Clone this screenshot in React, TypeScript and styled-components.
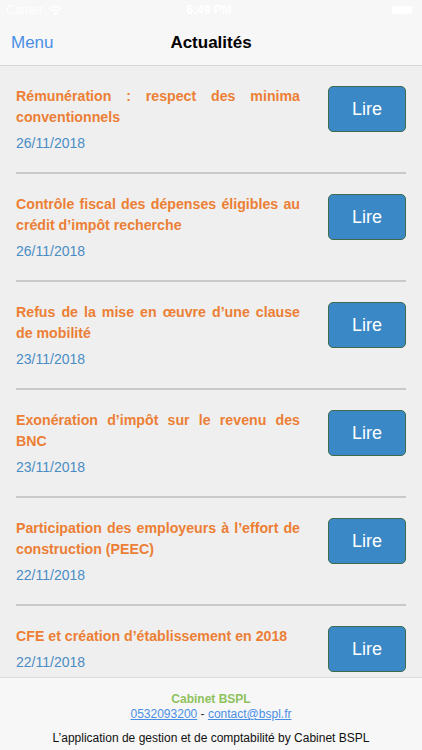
import React from 'react';
import styled, { createGlobalStyle } from 'styled-components';

type News = { title: string; date: string };

const news: News[] = [
  { title: 'Rémunération : respect des minima conventionnels', date: '26/11/2018' },
  { title: 'Contrôle fiscal des dépenses éligibles au crédit d’impôt recherche', date: '26/11/2018' },
  { title: 'Refus de la mise en œuvre d’une clause de mobilité', date: '23/11/2018' },
  { title: 'Exonération d’impôt sur le revenu des BNC', date: '23/11/2018' },
  { title: 'Participation des employeurs à l’effort de construction (PEEC)', date: '22/11/2018' },
  { title: 'CFE et création d’établissement en 2018', date: '22/11/2018' },
];

export default function App() {
  return (
    <Screen>
      <GlobalStyle />
      <StatusBar>
        <Carrier>
          Carrier
          <svg width="15" height="11" viewBox="0 0 15 11">
            <path d="M7.5 10.5 L5.2 8 A3.4 3.4 0 0 1 9.8 8 Z" fill="#fff" />
            <path d="M3.6 6.3 A5.6 5.6 0 0 1 11.4 6.3" stroke="#fff" strokeWidth="1.6" fill="none" />
            <path d="M1.4 4 A8.6 8.6 0 0 1 13.6 4" stroke="#fff" strokeWidth="1.6" fill="none" />
          </svg>
        </Carrier>
        <Clock>6:49 PM</Clock>
        <Battery />
      </StatusBar>
      <NavBar>
        <NavLink>Menu</NavLink>
        <NavTitle>Actualités</NavTitle>
      </NavBar>
      <List>
        {news.map((n, i) => (
          <Item key={i} $last={i === news.length - 1}>
            <ItemText>
              <ItemTitle>{n.title}</ItemTitle>
              <ItemDate>{n.date}</ItemDate>
            </ItemText>
            <ReadButton>Lire</ReadButton>
          </Item>
        ))}
      </List>
      <Footer>
        <Company>Cabinet BSPL</Company>
        <Contacts>
          <Link>0532093200</Link> - <Link>contact@bspl.fr</Link>
        </Contacts>
        <Tagline>L’application de gestion et de comptabilité by Cabinet BSPL</Tagline>
      </Footer>
    </Screen>
  );
}

const GlobalStyle = createGlobalStyle`
  body {
    margin: 0;
    font-family: 'Liberation Sans', Arial, sans-serif;
  }
`;

const Screen = styled.div`
  display: flex;
  flex-direction: column;
  width: 422px;
  height: 750px;
  overflow: hidden;
  background: #efefef;
`;

const StatusBar = styled.div`
  display: flex;
  align-items: center;
  justify-content: space-between;
  height: 20px;
  padding: 0 10px 0 6px;
  background: #f7f7f7;
  color: #fff;
  font-size: 12px;
`;

const Carrier = styled.div`
  display: flex;
  align-items: center;
  gap: 5px;
  width: 100px;
`;

const Clock = styled.div`
  font-weight: 600;
`;

const Battery = styled.div`
  width: 100px;
  display: flex;
  justify-content: flex-end;

  &::after {
    content: '';
    width: 20px;
    height: 8px;
    background: #fff;
    border-radius: 2px;
  }
`;

const NavBar = styled.div`
  position: relative;
  display: flex;
  align-items: center;
  justify-content: center;
  height: 45px;
  background: #f7f7f7;
  border-bottom: 1px solid #d6d6d6;
`;

const NavLink = styled.span`
  position: absolute;
  left: 11px;
  font-size: 17px;
  color: #4a8fe6;
`;

const NavTitle = styled.span`
  font-size: 17px;
  font-weight: 700;
  color: #000;
`;

const List = styled.div`
  flex: 1;
  overflow: hidden;
  padding: 0 16px;
`;

const Item = styled.div<{ $last: boolean }>`
  display: flex;
  justify-content: space-between;
  align-items: flex-start;
  padding: 20px 0 19px;
  border-bottom: ${(p) => (p.$last ? 'none' : '2px solid #c9c9c9')};
`;

const ItemText = styled.div`
  width: 284px;
`;

const ItemTitle = styled.div`
  font-size: 14.2px;
  font-weight: 700;
  line-height: 21px;
  color: #ec7f35;
  text-align: justify;
`;

const ItemDate = styled.div`
  margin-top: 5px;
  font-size: 14px;
  line-height: 20px;
  color: #4a8cc4;
`;

const ReadButton = styled.button`
  width: 78px;
  height: 46px;
  background: #3a88c6;
  border: 1px solid #3e6b4c;
  border-radius: 5px;
  color: #fff;
  font-family: 'Liberation Sans', Arial, sans-serif;
  font-size: 18px;
`;

const Footer = styled.div`
  display: flex;
  flex-direction: column;
  align-items: center;
  height: 73px;
  padding-top: 14px;
  box-sizing: border-box;
  background: #f7f7f7;
  border-top: 1px solid #dcdcdc;
  font-size: 12px;
  line-height: 15px;
`;

const Company = styled.div`
  font-weight: 700;
  color: #8fc25c;
`;

const Contacts = styled.div`
  color: #333;
`;

const Link = styled.span`
  color: #4a8fe6;
  text-decoration: underline;
`;

const Tagline = styled.div`
  margin-top: 9px;
  color: #111;
`;
